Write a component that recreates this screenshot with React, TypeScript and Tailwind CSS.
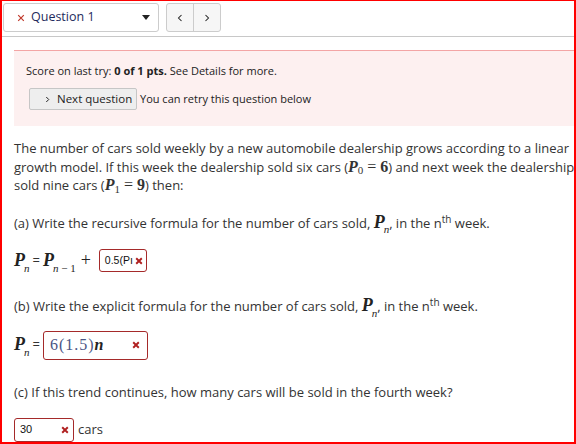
import React from "react";

const Xmark = ({ className = "", w = "2" }: { className?: string; w?: string }) => (
  <svg viewBox="0 0 10 10" className={className} fill="none" stroke="currentColor" strokeWidth={w} strokeLinecap="butt">
    <path d="M1.5 1.5 L8.5 8.5 M8.5 1.5 L1.5 8.5" />
  </svg>
);

const Pn = ({ sub = "n" }: { sub?: React.ReactNode }) => (
  <span className="font-['Liberation_Serif',serif] text-[18px] text-[#222] whitespace-nowrap">
    <i className="font-bold">P</i>
    <sub className="-ml-[1px] text-[11px] italic align-[-3px]">{sub}</sub>
  </span>
);

export default function App() {
  return (
    <div className="w-[576px] h-[444px] overflow-hidden bg-white border-2 border-t border-[#ff0000] font-['Open_Sans',sans-serif] text-[#333]">
      {/* top bar */}
      <div className="flex items-start pt-[2px] pl-[1px]">
        <div className="w-[156px] h-[29px] border border-[#cccccc] rounded-[3px] flex items-center pl-[13px] pr-[8px]">
          <Xmark className="w-[8px] h-[8px] text-[#c0392b]" w="1.5" />
          <span className="ml-[6px] text-[12.5px] text-[#1e2a5c]">Question 1</span>
          <span className="ml-auto w-0 h-0 border-l-[4px] border-r-[4px] border-t-[5px] border-l-transparent border-r-transparent border-t-[#222]" />
        </div>
        <div className="ml-[7px] flex h-[29px] border border-[#cccccc] rounded-[3px] bg-[#f6f6f6]">
          <div className="w-[27px] flex items-center justify-center border-r border-[#cccccc]">
            <svg viewBox="0 0 8 10" className="w-[6px] h-[8px]" fill="none" stroke="#222" strokeWidth="1.4"><path d="M6 1 L2 5 L6 9" /></svg>
          </div>
          <div className="w-[26px] flex items-center justify-center">
            <svg viewBox="0 0 8 10" className="w-[6px] h-[8px]" fill="none" stroke="#222" strokeWidth="1.4"><path d="M2 1 L6 5 L2 9" /></svg>
          </div>
        </div>
      </div>
      <div className="mt-[4px] border-b border-[#c8c8c8]" />

      {/* alert */}
      <div className="ml-[12px] mt-[13px] bg-[#fdf0f0] border-t border-[#f3a5a5] pl-[12px] pt-[12px] pb-[16px]">
        <div className="text-[11px] leading-[16px] text-[#222] whitespace-nowrap">
          Score on last try: <b>0 of 1 pts.</b> See Details for more.
        </div>
        <div className="mt-[9px] flex items-center whitespace-nowrap">
          <div className="ml-[3px] w-[108px] h-[22px] border border-[#c6c6c6] rounded-[2px] bg-[#eeeeee] flex items-center pl-[15px] text-[11.5px] text-[#222]">
            <svg viewBox="0 0 8 10" className="w-[5px] h-[7px] mr-[7px]" fill="none" stroke="#222" strokeWidth="1.6"><path d="M2 1 L6 5 L2 9" /></svg>
            Next question
          </div>
          <span className="ml-[3px] text-[11px] text-[#222]">You can retry this question below</span>
        </div>
      </div>

      {/* question */}
      <div className="pl-[12px] mt-[14px] text-[13px] leading-[17.5px] text-[#333] whitespace-nowrap">
        <p>The number of cars sold weekly by a new automobile dealership grows according to a linear</p>
        <p>
          growth model. If this week the dealership sold six cars (
          <span className="font-['Liberation_Serif',serif] text-[16px]"><i className="font-bold">P</i><sub className="text-[11px]">0</sub> = <b>6</b></span>
          ) and next week the dealership
        </p>
        <p>
          sold nine cars (
          <span className="font-['Liberation_Serif',serif] text-[16px]"><i className="font-bold">P</i><sub className="text-[11px]">1</sub> = <b>9</b></span>
          ) then:
        </p>

        <p className="mt-[19px]">
          (a) Write the recursive formula for the number of cars sold, <Pn />, in the n<sup className="text-[10px]">th</sup> week.
        </p>
        <div className="mt-[17px] flex items-center">
          <Pn />
          <span className="mx-[3px] text-[13px]">=</span>
          <Pn sub={<>n<span className="not-italic"> − 1</span></>} />
          <span className="ml-[5px] font-['Liberation_Serif',serif] text-[18px] text-[#222]">+</span>
          <div className="ml-[8px] w-[48px] h-[23px] border border-[#a52a2a] rounded-[3px] flex items-center pl-[5px] pr-[3px] font-['Liberation_Sans',sans-serif] text-[10.5px] text-[#111]">
            0.5(Pı
            <Xmark className="ml-auto w-[8px] h-[8px] text-[#b02020]" w="2.4" />
          </div>
        </div>

        <p className="mt-[25px]">
          (b) Write the explicit formula for the number of cars sold, <Pn />, in the n<sup className="text-[10px]">th</sup> week.
        </p>
        <div className="mt-[15px] flex items-center">
          <Pn />
          <span className="mx-[3px] text-[13px]">=</span>
          <div className="w-[105px] h-[29px] border border-[#a52a2a] rounded-[3px] flex items-center pl-[6px] pr-[7px] font-['Liberation_Serif',serif] text-[16px]">
            <span className="text-[#4a5585] tracking-[1px]">6(1.5)</span>
            <i className="font-bold text-[#222]">n</i>
            <Xmark className="ml-auto w-[8px] h-[8px] text-[#b02020]" w="2.4" />
          </div>
        </div>

        <p className="mt-[24px]">(c) If this trend continues, how many cars will be sold in the fourth week?</p>
        <div className="mt-[17px] flex items-center">
          <div className="w-[60px] h-[24px] border border-[#a52a2a] rounded-[3px] flex items-center pl-[5px] pr-[4px] font-['Liberation_Sans',sans-serif] text-[11px] text-[#111]">
            30
            <Xmark className="ml-auto w-[8px] h-[8px] text-[#b02020]" w="2.4" />
          </div>
          <span className="ml-[4px]">cars</span>
        </div>
      </div>
    </div>
  );
}
